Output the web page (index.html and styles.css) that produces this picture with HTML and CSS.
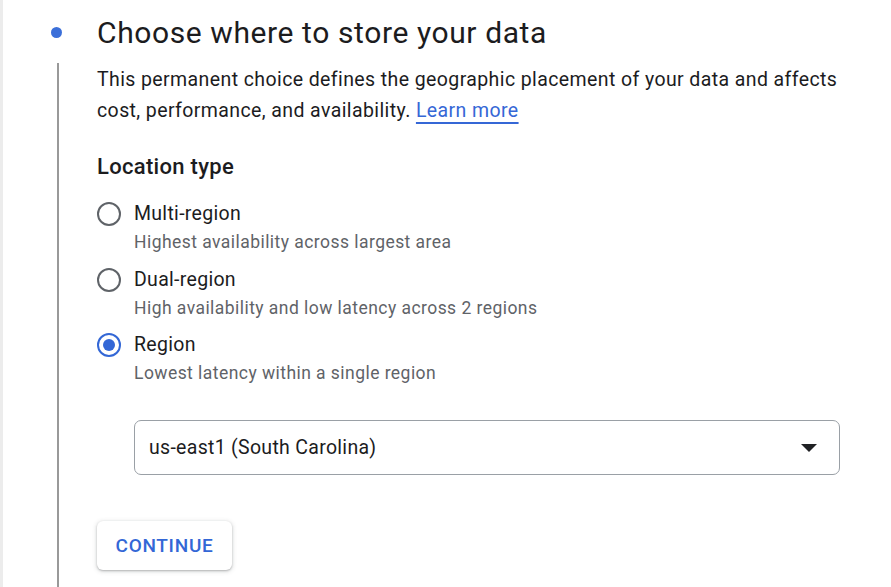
FILE: index.html
```html
<!DOCTYPE html>
<html>
<head>
<meta charset="utf-8">
<link rel="stylesheet" href="styles.css">
</head>
<body>
<div class="page">
  <div class="step">
    <div class="rail">
      <div class="dot"></div>
      <div class="line"></div>
    </div>
    <div class="content">
      <h1 class="title">Choose where to store your data</h1>
      <p class="desc">This permanent choice defines the geographic placement of your data and affects cost, performance, and availability. <a class="link" href="#">Learn more</a></p>
      <h2 class="subtitle">Location type</h2>
      <div class="options">
        <div class="option">
          <span class="radio"></span>
          <div class="opt-text">
            <div class="opt-label">Multi-region</div>
            <div class="opt-hint">Highest availability across largest area</div>
          </div>
        </div>
        <div class="option">
          <span class="radio"></span>
          <div class="opt-text">
            <div class="opt-label">Dual-region</div>
            <div class="opt-hint">High availability and low latency across 2 regions</div>
          </div>
        </div>
        <div class="option">
          <span class="radio checked"></span>
          <div class="opt-text">
            <div class="opt-label">Region</div>
            <div class="opt-hint">Lowest latency within a single region</div>
          </div>
        </div>
      </div>
      <div class="select">
        <span class="select-value">us-east1 (South Carolina)</span>
        <svg class="caret" width="16" height="8" viewBox="0 0 16 8"><path d="M0 0 L16 0 L8 8 Z" fill="#202124"/></svg>
      </div>
      <button class="btn">CONTINUE</button>
    </div>
  </div>
</div>
</body>
</html>
```

FILE: styles.css
```css
html, body {
  margin: 0;
  padding: 0;
  background: #fff;
}
body {
  font-family: Roboto, "Liberation Sans", sans-serif;
  color: #202124;
  height: 587px;
  overflow: hidden;
}
.page {
  height: 587px;
  border-left: 3px solid #ececec;
  box-sizing: border-box;
}
.step {
  display: flex;
  height: 100%;
}
.rail {
  width: 94px;
  flex: none;
  position: relative;
}
.dot {
  position: absolute;
  left: 48px;
  top: 27px;
  width: 11px;
  height: 11px;
  border-radius: 50%;
  background: #3b6fd9;
}
.line {
  position: absolute;
  left: 54px;
  top: 63px;
  bottom: 0;
  width: 2px;
  background: #999;
}
.content {
  flex: 1;
  padding-top: 14px;
}
.title {
  margin: 0;
  font-size: 30px;
  font-weight: 400;
  letter-spacing: 0.6px;
  line-height: 38px;
  color: #1c1c1e;
}
.desc {
  margin: 12px 0 0;
  font-size: 19.5px;
  letter-spacing: 0.4px;
  line-height: 31px;
  color: #1c1c1e;
  width: 770px;
}
.link {
  color: #3567d6;
  text-decoration: underline;
  text-decoration-thickness: 1.5px;
  text-underline-offset: 5px;
}
.subtitle {
  margin: 27px 0 0;
  font-size: 22px;
  letter-spacing: 0.3px;
  font-weight: 500;
  line-height: 28px;
  color: #1c1c1e;
}
.options {
  margin-top: 21px;
  display: flex;
  flex-direction: column;
  gap: 9.5px;
}
.option {
  display: flex;
  gap: 13px;
  align-items: flex-start;
}
.radio {
  width: 24px;
  height: 24px;
  box-sizing: border-box;
  border: 2px solid #5f6368;
  border-radius: 50%;
  flex: none;
  position: relative;
}
.radio.checked {
  border-color: #3367d6;
}
.radio.checked::after {
  content: "";
  position: absolute;
  left: 4px;
  top: 4px;
  width: 12px;
  height: 12px;
  border-radius: 50%;
  background: #3367d6;
}
.opt-label {
  font-size: 19.5px;
  letter-spacing: 0.3px;
  line-height: 24px;
  color: #1c1c1e;
}
.opt-hint {
  font-size: 17.5px;
  letter-spacing: 0.45px;
  line-height: 32px;
  color: #5f6368;
}
.select {
  margin: 31px 0 0 37px;
  width: 706px;
  height: 55px;
  box-sizing: border-box;
  border: 1.5px solid #9aa0a6;
  border-radius: 7px;
  display: flex;
  align-items: center;
  justify-content: space-between;
  padding: 0 22px 0 14px;
}
.select-value {
  font-size: 19.5px;
  letter-spacing: 0.3px;
  color: #1c1c1e;
}
.btn {
  margin-top: 46px;
  height: 49px;
  width: 135px;
  border: none;
  border-radius: 6px;
  background: #fff;
  box-shadow: 0 1px 2px rgba(60,64,67,0.3), 0 1px 4px 1px rgba(60,64,67,0.15);
  font-family: Roboto, "Liberation Sans", sans-serif;
  font-size: 19px;
  font-weight: 500;
  color: #3367d6;
  letter-spacing: 0.7px;
  padding: 0;
  cursor: pointer;
}
```
